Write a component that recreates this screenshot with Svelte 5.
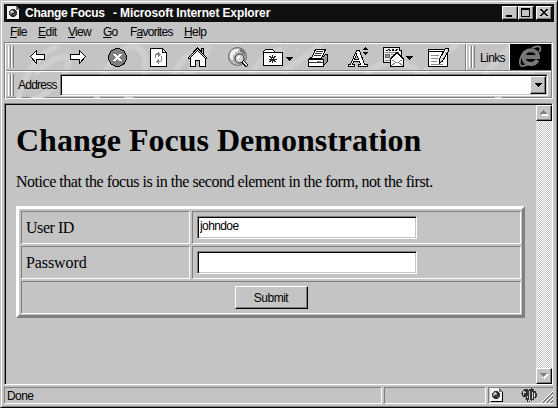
<script>
  const menus = [
    { pre: '', key: 'F', post: 'ile', w: 28, s: -0.6 },
    { pre: '', key: 'E', post: 'dit', w: 30, s: -0.5 },
    { pre: '', key: 'V', post: 'iew', w: 35, s: -0.75 },
    { pre: '', key: 'G', post: 'o', w: 27, s: -0.8 },
    { pre: 'F', key: 'a', post: 'vorites', w: 54, s: -0.75 },
    { pre: '', key: 'H', post: 'elp', w: 30, s: -0.6 }
  ];
  const tools = ['back', 'forward', 'stop', 'refresh', 'home', 'search', 'favorites', 'print', 'font', 'mail', 'edit'];
</script>

{#snippet page()}
  <path d="M0 0h9v1h1v1h1v1h1v10H0z" fill="#f2f2f2"/>
  <path d="M9 0h1v1h1v1h1v1h1v1H9z" fill="#777"/>
  <path d="M12 4h1v10H1v-1h11z" fill="#000"/>
  <path d="M4 3h4v1h1v1h1v4H9v1H8v1H4v-1H3V9H2V5h1V4h1z" fill="#333"/>
  <path d="M4 4h2v1h1v2H5v1H3V5h1z" fill="#999"/>
  <path d="M4 5h2v1H4z" fill="#ddd"/>
  <path d="M7 8h1v1H7z" fill="#888"/>
{/snippet}

<div class="window">
  <header class="title">
    <svg width="13" height="14" shape-rendering="crispEdges">{@render page()}</svg>
    <span class="t1">Change Focus</span><span class="t2">- Microsoft Internet Explorer</span>
    <div class="controls">
      <button aria-label="Minimize"><svg width="12" height="10"><path d="M2 7h6v2H2z"/></svg></button>
      <button aria-label="Maximize"><svg width="12" height="10"><path d="M1 0h9v9H1zM2 2v6h7V2z" fill-rule="evenodd"/></svg></button>
      <button class="close" aria-label="Close"><svg width="12" height="10"><path d="M2 1h2v1h1v1h2V2h1V1h2v1H9v1H8v1H7v1h1v1h1v1h1v1H8V7H7V6H5v1H4v1H2V7h1V6h1V5h1V4H4V3H3V2H2z"/></svg></button>
    </div>
  </header>
  <nav>
    {#each menus as m}
      <span style="width:{m.w}px;letter-spacing:{m.s}px">{m.pre}<u>{m.key}</u>{m.post}</span>
    {/each}
  </nav>

  <section class="bars">
    <svg class="swirl" width="547" height="54" viewBox="6 43 547 54" fill="none" stroke="#cecece" stroke-width="6">
      <path d="M18 100Q25 62 58 44M35 72Q75 42 67 68Q60 88 30 100M96 101Q100 70 123 49Q139 40 145 56Q148 80 126 99M174 75Q180 53 209 45M184 75Q205 65 208 44M252 72Q264 51 282 48M282 72L322 43M365 73Q382 59 398 62Q423 67 419 79M423 72L457 43M484 74L512 44M496 100Q508 77 535 69"/>
    </svg>
    <div class="band one">
      <i class="grip"></i>
      <div class="tools">
        {#each tools as t, n}
          <svg class="tool" width="40" height="24" viewBox="{18 + n * 40} 46 40 24" shape-rendering="crispEdges" role="img" aria-label={t}>
            {#if t === 'back'}
              <path d="M30.5 56.5l6-6v4h8v5h-8v4z" fill="#fff" stroke="#000"/>
            {:else if t === 'forward'}
              <path d="M85.5 56.5l-6-6v4h-9v5h9v4z" fill="#fff" stroke="#000"/>
            {:else if t === 'stop'}
              <circle cx="117.5" cy="57.5" r="9" fill="#808080" stroke="#000"/>
              <path d="M113 54h3v1h1v1h1v-1h1v-1h3v1h-1v1h-1v1h-1v1h1v1h1v1h1v1h-3v-1h-1v-1h-1v1h-1v1h-3v-1h1v-1h1v-1h1v-1h-1v-1h-1v-1h-1z" fill="#fff"/>
            {:else if t === 'refresh'}
              <path d="M150.5 48.5h12l4 4v14h-16z" fill="#fff" stroke="#000"/>
              <path d="M162.5 48.5v4h4" fill="none" stroke="#000"/>
              <path d="M155 58v-4h1v-1h2v-1h1v1h1v1h1v1h-1v1h-1v1h-1v-2h-2v3zM161 56h1v5h-1v1h-2v2h-1v-1h-1v-1h-1v-1h1v-1h1v-1h1v2h2z" fill="#858585"/>
            {:else if t === 'home'}
              <path d="M190.500 57v9.500h15V57l-8-8z" fill="#fff" stroke="#000"/>
              <path d="M201.500 48.500h2v6h-2z" fill="#aaa" stroke="#000"/>
              <path d="M188.500 57.500l9-9.500 9 9.500v1h-1l-8-8-8 8h-1z" fill="#ddd" stroke="#000"/>
              <path d="M195.500 66.500v-6h4v6" fill="#bbb" stroke="#000"/>
            {:else if t === 'search'}
              <circle cx="237.500" cy="56.500" r="9" fill="#b8b8b8" stroke="#666" shape-rendering="auto"/>
              <path d="M231 51h1v-1h2v-1h5v1h-1v2h-3v3h-2v5h-2v-2h-1v-5h1z" fill="#eee"/>
              <path d="M240 49h2v1h2v2h1v4h-1v-2h-2v-2h-2z" fill="#777"/>
              <circle cx="239.500" cy="58.500" r="4.500" fill="#d5d5d5" stroke="#222" shape-rendering="auto"/>
              <path d="M237 57h1v-1h2v2h-1v1h-2z" fill="#fff"/>
              <path d="M242.500 61.500l5 5" stroke="#111" stroke-width="3"/><path d="M243 61.500l4 4" stroke="#fff"/>
            {:else if t === 'favorites'}
              <path d="M263.500 65.500v-14l2-2h7l2 2v1h8v13z" fill="#fff" stroke="#000"/>
              <path d="M264 52.500h11" stroke="#000"/>
              <path d="M272.500 55v8M268.500 59h8M269.500 56l6 6M275.500 56l-6 6" stroke="#222" fill="none"/>
              <path d="M272 58h1v1h-1z" fill="#fff"/>
              <path d="M286 57h7v1h-1v1h-1v1h-1v1h-1v-1h-1v-1h-1v-1h-1z"/>
            {:else if t === 'print'}
              <path d="M308.500 59.500l4-3h11l2-2h2v7l-5 5h-14z" fill="#999" stroke="#000"/>
              <path d="M308.500 59.500h15v7h-15z" fill="#fff" stroke="#000"/>
              <path d="M311.500 58.500l4-9h10l-4 9z" fill="#fff" stroke="#000"/>
              <path d="M316 51.500h7M315 53.500h7M314 55.500h7M309 62.500h14" stroke="#333"/>
              <path d="M317 61h4v1h-4z" fill="#888"/>
            {:else if t === 'font'}
              <path d="M348.500 66.500v-2h2l6-14h3l5 14h3v2h-9v-2h2l-1-3h-6l-1 3h2v2zM354.500 59.500h4l-2-5z" fill="#fff" stroke="#000" fill-rule="evenodd"/>
              <path d="M365 47h1v1h1v1h1v1h-5v-1h1v-1h1zM363 52h5v1h-1v1h-1v1h-1v-1h-1v-1h-1z"/>
            {:else if t === 'mail'}
              <path d="M383.500 47.500h16v3h2v12h-18z" fill="#eee" stroke="#000"/>
              <path d="M386 50h2v-1h2v1h2v-1h2v1h2v-1h2v1h-1v1h-2v-1h-1v1h-2v-1h-1v1h-2v-1h-1v1h-2z" fill="#111"/>
              <path d="M385 52.500h14M385 60.500h6M391 54.500h6M391 56.500h3" stroke="#888"/>
              <path d="M385.500 54.500h4v3h-4z" fill="#999" stroke="#666"/>
              <path d="M390.500 59l6.500-6.500 6.500 6.500v7.500h-13z" fill="#fff" stroke="#000"/>
              <path d="M392 60l5 3 5-3M391 66l5-4M403 66l-5-4" fill="none" stroke="#888"/>
              <path d="M406 56h7v1h-1v1h-1v1h-1v1h-1v-1h-1v-1h-1v-1h-1z"/>
            {:else}
              <path d="M428.500 49.500h19v17h-19z" fill="#fff" stroke="#000"/>
              <path d="M429 51.500h18" stroke="#000"/>
              <path d="M431 55.500h8M431 58.500h7M431 61.500h6M431 64.500h12" stroke="#888"/>
              <path d="M439.500 63v-4l6-11h3v3l-6 10z" fill="#ccc" stroke="#000"/>
              <path d="M446.500 49l-5 10" stroke="#fff"/>
            {/if}
          </svg>
        {/each}
      </div>
      <div class="links"><i class="grip"></i><span>Links</span></div>
      <svg class="logo" width="41" height="26" viewBox="0 0 41 26">
        <rect width="41" height="26" fill="#000"/>
        <path d="M13.500 13h14.500c0-9-14.500-9-14.500 0 0 8 11 9 14 3" fill="none" stroke="#777" stroke-width="4"/>
        <path d="M22 4C28 1 33 2 29 8M15 7C9 13 8 23 13 22q3 0 7-3" fill="none" stroke="#808080" stroke-width="1.700"/>
      </svg>
    </div>
    <div class="band two">
      <i class="grip"></i>
      <label for="addr">Address</label>
      <div class="combo"><input id="addr" /><button aria-label="Open list"><svg width="7" height="4"><path d="M0 0h7v1H6v1H5v1H4v1H3V3H2V2H1V1H0z"/></svg></button></div>
    </div>
  </section>

  <main>
    <div class="doc">
      <h1><span>Change Focus Demonstration</span></h1>
      <p>Notice that the focus is in the second element in the form, not the first.</p>
      <form onsubmit={(e) => e.preventDefault()}>
        <div class="cell lab uid">User ID</div><div class="cell"><input value="johndoe" aria-label="User ID" /></div>
        <div class="cell lab pwd">Password</div><div class="cell"><input type="password" aria-label="Password" /></div>
        <div class="cell wide"><button>Submit</button></div>
      </form>
    </div>
    <div class="scroll">
      <button aria-label="Up"><svg width="9" height="6"><path d="M4 1h1v1h1v1h1v1h1v2H2V4h1V3h1z" fill="#fff"/><path d="M3 0h1v1h1v1h1v1h1v1H0V3h1V2h1V1h1z" fill="#808080"/></svg></button>
      <button aria-label="Down"><svg width="9" height="6"><path d="M1 1h8v1H8v1H7v1H6v1H5v1H4V5H3z" fill="#fff"/><path d="M0 0h7v1H6v1H5v1H4v1H3V3H2V2H1V1H0z" fill="#808080"/></svg></button>
    </div>
  </main>

  <footer>
    <div class="pane done"><span>Done</span></div>
    <div class="pane"></div>
    <div class="pane last">
      <svg width="64" height="15" viewBox="488 388 64 15" shape-rendering="crispEdges">
        <g transform="translate(489 388)">{@render page()}</g>
        <path d="M520 393h1v-2h1v-1h1v-1h4v1h1v-1h2v-1h1v1h2v2h2v2h1v4h-1v1h-2v2h-2v1h-1v-1h-1v2h-1v-2h-1v2h-1v-2h-1v-1h-1v-2h-2v-1h-1v-2h-1z" fill="#333"/>
        <path d="M522 391h2v1h1v1h-2v2h-1zM528 391h1v10h-1zM531 392h1v7h-1zM526 396h1v2h-1z" fill="#ccc"/>
        <path d="M533 393h1v4h-1z" fill="#eee"/>
        <path d="M524 397h1v3h-1zM534 398h1v1h-1z" fill="#999"/>
        <path d="M540 403l12-12M544 403l8-8M548 403l4-4" stroke="#fff"/>
        <path d="M541.500 403l10.500-10.500M545.500 403l6.500-6.500M549.500 403l2.500-2.500" stroke="#808080" stroke-width="2"/>
      </svg>
    </div>
  </footer>
</div>

<style>
  :global(body) { background: #c4c4c4; overflow: hidden; }
  * { box-sizing: border-box; }
  .window {
    width: 558px; height: 408px; background: #c4c4c4; color: #000;
    font: 12px/14px "Liberation Sans", Arial, sans-serif;
    padding: 3px 3px 2px 3px;
    border: 1px solid; border-color: #c4c4c4 #000 #000 #c4c4c4;
    box-shadow: inset 1px 1px #fff, inset -1px -1px #808080;
    display: flex; flex-direction: column;
  }
  svg { display: block; }
  button, input { font: inherit; color: #000; border-radius: 0; margin: 0; outline: 0; }
  button {
    padding: 0; background: #c4c4c4; border: 1px solid; border-color: #fff #000 #000 #fff;
    box-shadow: inset -1px -1px #808080; display: flex; align-items: center; justify-content: center;
  }
  .title { height: 18px; flex: none; background: #101010; color: #fff; display: flex; align-items: center; padding: 0 2px 0 3px; font-weight: bold; white-space: pre; width: 550px; }
  .t1 { margin-left: 5px; width: 88px; letter-spacing: -.25px; }
  .t2 { letter-spacing: -.12px; }
  .controls { display: flex; margin-left: auto; }
  .controls button { width: 16px; height: 14px; }
  .controls .close { margin-left: 2px; }
  nav { height: 20px; flex: none; display: flex; padding: 3px 0 0 6px; }
  nav span { flex: none; white-space: nowrap; }
  u { text-decoration: underline; text-underline-offset: 1px; text-decoration-thickness: 1px; }
  .bars { position: relative; flex: none; width: 549px; height: 57px; border: 1px solid; border-color: #808080 #fff #fff #808080; box-shadow: inset 1px 1px #fff, inset -1px -1px #808080; padding: 1px; }
  .swirl { position: absolute; left: 1px; top: 1px; }
  .band { position: relative; display: flex; }
  .one { height: 27px; border-bottom: 1px solid #808080; }
  .two { height: 27px; border-top: 1px solid #fff; padding-top: 2px; }
  .grip { display: block; flex: none; width: 6px; height: 22px; margin: 2px 0 0 2px; background: linear-gradient(90deg, #fff 1px, #c4c4c4 1px 2px, #808080 2px 3px, #fff 3px 4px, #c4c4c4 4px 5px, #808080 5px); }
  .two .grip { margin-top: 0; }
  .tools { display: flex; margin: 2px 0 0 4px; }
  .tool { flex: none; }
  .links { display: flex; width: 45px; margin-left: 8px; border-left: 1px solid #fff; box-shadow: -1px 0 #808080; }
  .links span { margin: 7px 0 0 5px; letter-spacing: -.6px; }
  .logo { margin-left: 0; flex: none; box-shadow: -1px 0 #fff; }
  label { margin: 4px 0 0 4px; width: 42px; letter-spacing: -.75px; white-space: nowrap; }
  .combo { display: flex; width: 488px; height: 22px; background: #fff; border: 1px solid; border-color: #808080 #fff #fff #808080; box-shadow: inset 1px 1px #000, inset -1px -1px #c4c4c4; padding: 1px; }
  .combo input { flex: 1; min-width: 0; border: 0; background: none; }
  .combo button { width: 16px; }
  main { width: 549px; margin-top: 4px; height: 282px; flex: none; display: flex; border: 1px solid; border-color: #808080 #fff #fff #808080; box-shadow: inset 1px 1px #000; padding: 1px 0 0 1px; }
  .doc { flex: 1; padding: 0 0 0 10px; font-family: "Liberation Serif", "Times New Roman", serif; font-size: 16px; }
  h1 { margin: 17px 0 0; font-size: 32px; line-height: 36px; letter-spacing: 0; white-space: nowrap; }
  p { margin: 15px 0 0; line-height: 18px; letter-spacing: -.47px; white-space: nowrap; }
  form { width: 509px; height: 112px; margin: 15px 0 0; border: 3px solid; border-color: #fff #808080 #808080 #fff; padding: 2px; display: grid; grid-template-columns: 169px 329px; grid-template-rows: 33px 33px 33px; gap: 2px 2px; }
  .cell { border: 1px solid; border-color: #808080 #fff #fff #808080; padding: 4px; }
  .lab { line-height: 24px; white-space: nowrap; }
  .wide { grid-column: 1 / 3; display: flex; justify-content: center; }
  .wide button { width: 73px; height: 23px; font: 12px "Liberation Sans", Arial, sans-serif; letter-spacing: -.5px; }
  .cell input { display: block; width: 220px; height: 23px; padding: 0 2px 3px; background: #fff; border: 1px solid; border-color: #808080 #fff #fff #808080; box-shadow: inset 1px 1px #000, inset -1px -1px #c4c4c4; font: 12px "Liberation Sans", Arial, sans-serif; letter-spacing: -.6px; }
  .uid { letter-spacing: -.45px; } .pwd { letter-spacing: -.1px; }
  .scroll { width: 16px; display: flex; flex-direction: column; justify-content: space-between; background: repeating-conic-gradient(#fff 0 25%, #c4c4c4 0 50%) 0 0 / 2px 2px; }
  .scroll button { width: 16px; height: 16px; }
  footer { display: flex; width: 549px; height: 17px; margin-top: 2px; gap: 2px; }
  .pane { flex: 0 0 102px; border: 1px solid; border-color: #808080 #fff #fff #808080; }
  .done { flex-basis: 378px; padding: 1px 2px; }
  .done span { letter-spacing: -.6px; }
  .last { flex-basis: 65px; border-right: 0; }
</style>
